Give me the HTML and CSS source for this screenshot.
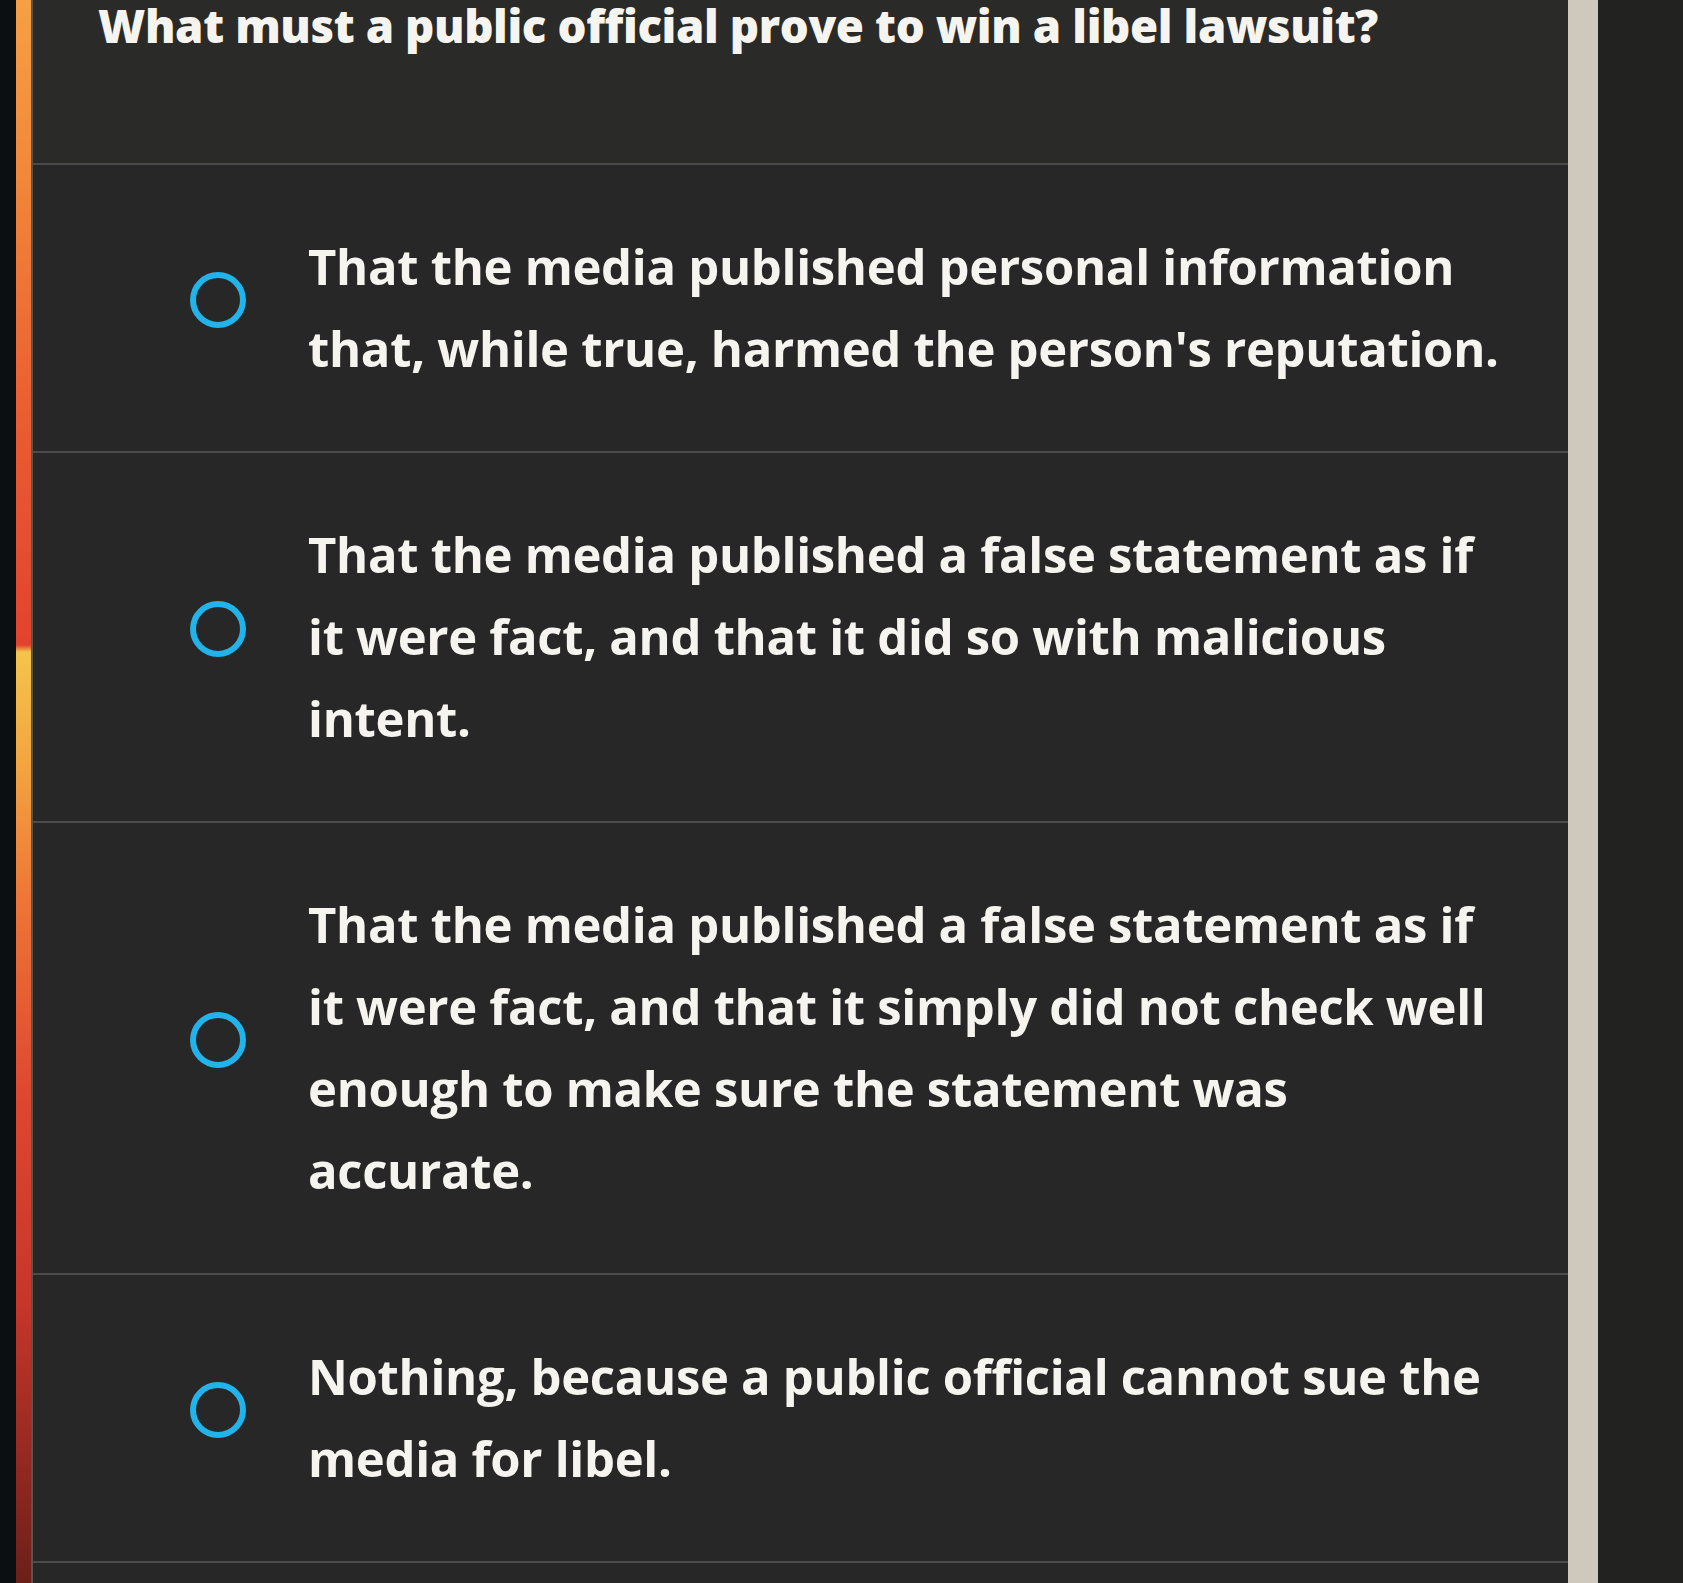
FILE: index.html
```html
<!DOCTYPE html>
<html lang="en">
<head>
<meta charset="utf-8">
<title>Question</title>
<link rel="stylesheet" href="styles.css">
</head>
<body>
<div class="screen">
  <div class="edge"></div>
  <div class="accent"></div>
  <div class="border"></div>
  <main class="panel">
    <header class="question">
      <h1>What must a public official prove to win a libel lawsuit?</h1>
    </header>
    <ul class="options">
      <li class="option">
        <span class="radio"></span>
        <p class="label">That the media published personal information that, while true, harmed the person's reputation.</p>
      </li>
      <li class="option">
        <span class="radio"></span>
        <p class="label">That the media published a false statement as if it were fact, and that it did so with malicious intent.</p>
      </li>
      <li class="option">
        <span class="radio"></span>
        <p class="label">That the media published a false statement as if it were fact, and that it simply did not check well enough to make sure the statement was accurate.</p>
      </li>
      <li class="option">
        <span class="radio"></span>
        <p class="label">Nothing, because a public official cannot sue the media for libel.</p>
      </li>
      <li class="option empty"></li>
    </ul>
  </main>
  <div class="scrollbar"></div>
  <div class="outside"></div>
</div>
</body>
</html>
```

FILE: styles.css
```css
html, body {
  margin: 0;
  padding: 0;
  height: 100%;
  overflow: hidden;
  background: #212121;
}

.screen {
  display: flex;
  height: 1583px;
  width: 1683px;
  font-family: "Open Sans", "Lato", "Liberation Sans", sans-serif;
  color: #f6f4ef;
  font-variant-ligatures: none;
}

.edge {
  width: 16px;
  background: #0b0f12;
}

.accent {
  width: 15px;
  background: linear-gradient(to bottom,
    #f6a043 0px,
    #f28a3a 160px,
    #ea5c32 420px,
    #e2432e 645px,
    #f4c44a 652px,
    #f3a640 760px,
    #ee7536 900px,
    #de4630 1100px,
    #c8362a 1300px,
    #6c1f1a 1583px);
}

.border {
  width: 2px;
  background: #55554f;
}

.panel {
  flex: 1;
  background: #282828;
  display: flex;
  flex-direction: column;
  overflow: hidden;
}

.question {
  flex: none;
  height: 163px;
  padding-left: 65px;
  background: #2a2a29;
  overflow: hidden;
}

.question h1 {
  margin: 0;
  font-size: 45.6px;
  line-height: 50px;
  font-weight: 800;
  letter-spacing: -0.4px;
}

.options {
  flex: none;
  list-style: none;
  margin: 0;
  padding: 0;
}

.option {
  display: flex;
  align-items: center;
  border-top: 2px solid #4a4a48;
  padding: 60px 0 62px 157px;
  background: #272727;
}

.radio {
  flex: none;
  width: 56px;
  height: 56px;
  box-sizing: border-box;
  border: 6px solid #22b3ea;
  border-radius: 50%;
  margin-right: 62px;
  margin-top: -14px;
}

.label {
  margin: 0;
  width: 1210px;
  font-size: 49px;
  line-height: 82px;
  font-weight: 700;
  letter-spacing: -0.3px;
}

.option.empty {
  height: 60px;
  padding: 0;
}

.scrollbar {
  width: 30px;
  background: #cfc8bc;
}

.outside {
  width: 85px;
  background: #222221;
}
```
